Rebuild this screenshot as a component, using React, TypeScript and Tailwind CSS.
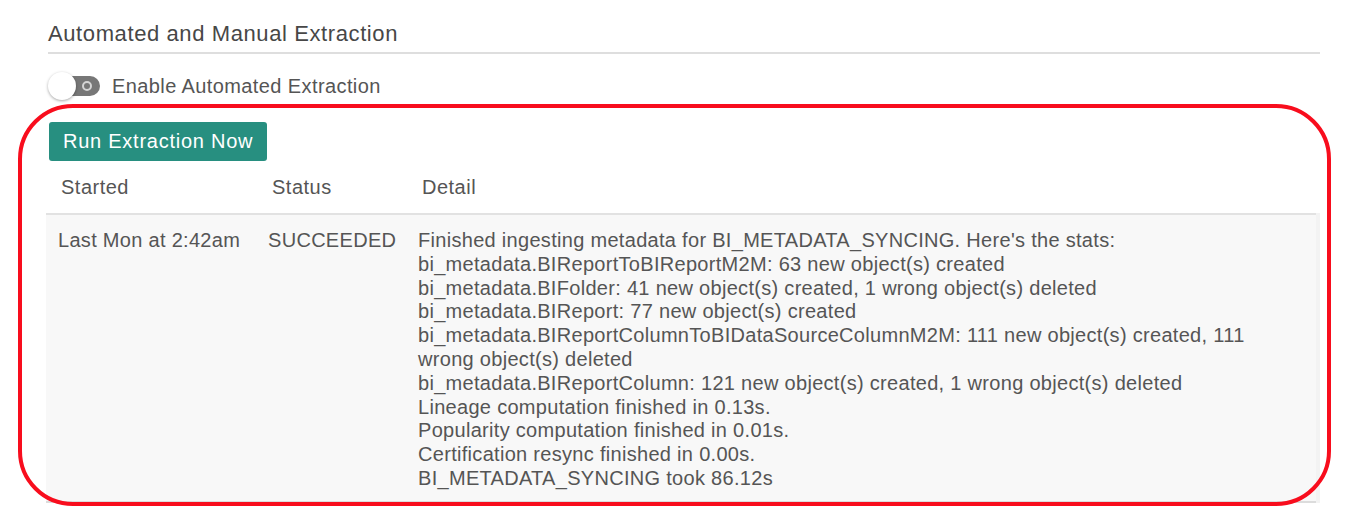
import React from "react";

const lines = [
  "Finished ingesting metadata for BI_METADATA_SYNCING. Here's the stats:",
  "bi_metadata.BIReportToBIReportM2M: 63 new object(s) created",
  "bi_metadata.BIFolder: 41 new object(s) created, 1 wrong object(s) deleted",
  "bi_metadata.BIReport: 77 new object(s) created",
  "bi_metadata.BIReportColumnToBIDataSourceColumnM2M: 111 new object(s) created, 111",
  "wrong object(s) deleted",
  "bi_metadata.BIReportColumn: 121 new object(s) created, 1 wrong object(s) deleted",
  "Lineage computation finished in 0.13s.",
  "Popularity computation finished in 0.01s.",
  "Certification resync finished in 0.00s.",
  "BI_METADATA_SYNCING took 86.12s",
];

export default function App() {
  return (
    <div
      className="relative w-[1350px] h-[522px] bg-white text-[#555] overflow-hidden"
      style={{ fontFamily: '"Liberation Sans", Arial, sans-serif' }}
    >
      <div className="pl-[46px] pr-[30px] pt-[22px]">
        <div className="ml-[2px] border-b-2 border-[#dedede] pb-[6px]">
          <h2 className="text-[22px] leading-[24px] tracking-[0.6px] text-[#474747]">
            Automated and Manual Extraction
          </h2>
        </div>

        <div className="mt-[18px] ml-[2px] flex items-center h-[28px]">
          <div className="relative w-[52px] h-[28px]">
            <div className="absolute left-[10px] top-[4px] w-[42px] h-[20px] rounded-full bg-[#777]">
              <div className="absolute right-[8px] top-[5px] w-[10px] h-[10px] rounded-full border-2 border-[#d4d4d4]" />
            </div>
            <div className="absolute left-0 top-0 w-[28px] h-[28px] rounded-full bg-white shadow-[0_1px_3px_rgba(0,0,0,0.35)]" />
          </div>
          <span className="ml-[12px] text-[20px] tracking-[0.4px] text-[#555]">Enable Automated Extraction</span>
        </div>

        <button className="mt-[22px] ml-[3px] h-[39px] px-[14px] rounded-[3px] bg-[#278f80] text-white text-[20px] tracking-[0.75px] leading-[39px]">
          Run Extraction Now
        </button>

        <div className="mt-[2px] flex">
          <div className="w-[1270px]">
            <div className="flex h-[52px] pt-[12px] border-b-2 border-[#e2e2e2] text-[20px] leading-[24px] tracking-[0.5px] text-[#555]">
              <div className="w-[210px] pl-[15px]">Started</div>
              <div className="w-[150px] pl-[16px]">Status</div>
              <div className="flex-1 pl-[16px]">Detail</div>
            </div>
            <div className="flex bg-[#f8f8f8] border-b-2 border-[#dcdcdc] pt-[14px] pb-[10px] text-[20px] leading-[23.8px] tracking-[0.3px] text-[#555]">
              <div className="w-[210px] pl-[12px] shrink-0 whitespace-nowrap">Last Mon at 2:42am</div>
              <div className="w-[150px] pl-[12px] shrink-0 whitespace-nowrap">SUCCEEDED</div>
              <div className="flex-1 pl-[12px] pr-[16px]">
                {lines.map((l, i) => (
                  <div key={i} className="whitespace-nowrap">{l}</div>
                ))}
              </div>
            </div>
          </div>
          <div className="mt-[50px] w-[4px] bg-[#f3f3f3]" />
        </div>
      </div>

      <div className="absolute left-[18px] top-[104px] w-[1313px] h-[402px] rounded-[55px] border-4 border-[#f80d1d] pointer-events-none" />
    </div>
  );
}
